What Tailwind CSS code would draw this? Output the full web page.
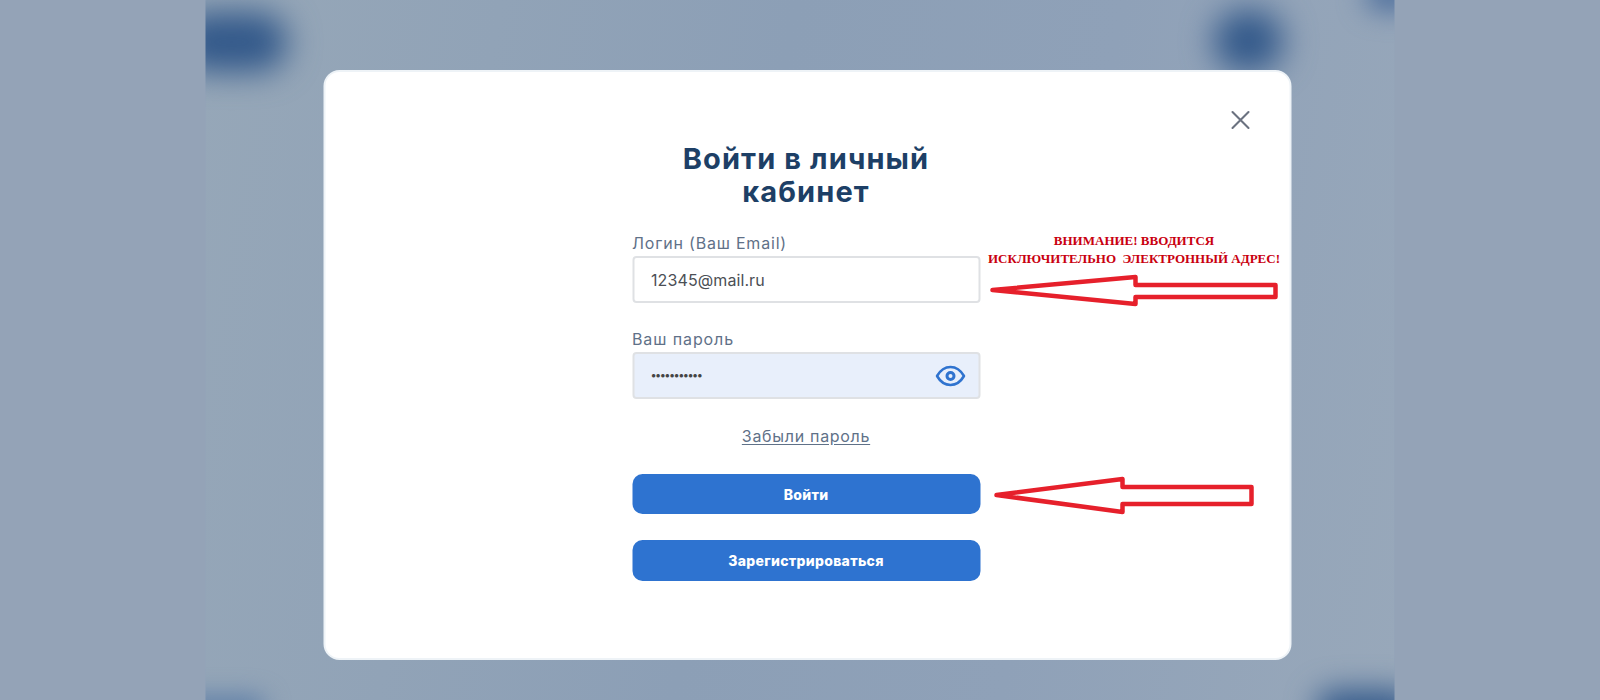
<!DOCTYPE html>
<html lang="ru">
<head>
<meta charset="utf-8">
<script src="https://cdn.jsdelivr.net/npm/@tailwindcss/browser@4"></script>
<title>Войти в личный кабинет</title>
</head>
<body class="m-0 h-[700px] w-[1600px] overflow-hidden bg-[#94a3b7] font-['Inter',sans-serif]">
<div class="relative mx-auto h-[700px] w-[1189px] -translate-x-[0.5px] overflow-hidden bg-[#91a3b9]">
  <div class="absolute inset-0 bg-[linear-gradient(100deg,#96a7b8_0%,#8c9fb6_45%,#8fa1b8_70%,#98a8ba_100%)]"></div>
  <div class="absolute left-[-30px] top-[12px] h-[60px] w-[112px] rounded-full bg-[#33598a] blur-[16px]"></div>
  <div class="absolute left-[1008px] top-[10px] h-[62px] w-[70px] rounded-full bg-[#33598a] blur-[16px]"></div>
  <div class="absolute left-[1160px] top-[-20px] h-[30px] w-[50px] rounded-full bg-[#46699a] blur-[14px]"></div>
  <div class="absolute left-[1110px] top-[690px] h-[40px] w-[100px] rounded-full bg-[#33598a] blur-[15px]"></div>
  <div class="absolute left-[-30px] top-[696px] h-[24px] w-[90px] rounded-full bg-[#5c7da6] blur-[12px]"></div>

  <div class="absolute left-[118px] top-[70px] flex h-[590px] w-[968px] justify-center rounded-[16px] border-[2px] border-[#eef3f7] bg-white pt-[70px]">
    <button class="absolute right-[39px] top-[38px] text-[#6b7280]" aria-label="Закрыть">
      <svg class="h-[20px] w-[20px]" viewBox="0 0 20 20" fill="none" stroke="currentColor" stroke-width="2.1" stroke-linecap="round"><path d="M2 2 18 18M18 2 2 18"/></svg>
    </button>
    <form class="ml-[-2px] flex w-[348px] flex-col text-[#5f7188]">
      <h1 class="text-center text-[29px] font-bold leading-[33px] tracking-[1.1px] text-[#1d3f66]">Войти в личный<br>кабинет</h1>
      <label class="mt-[24px] text-[16px] leading-[22px] tracking-[0.8px]">Логин (Ваш Email)</label>
      <div class="mt-[2px] flex h-[47px] items-center rounded-[4px] border-[2px] border-[#dfe1e4] bg-white pl-[17px] text-[16px] tracking-[0.1px] text-[#4b4f55]">12345@mail.ru</div>
      <label class="mt-[25px] text-[16px] leading-[22px] tracking-[0.9px]">Ваш пароль</label>
      <div class="mt-[2px] flex h-[47px] items-center justify-between rounded-[4px] border-[2px] border-[#dfe1e4] bg-[#e8effb] pl-[17px] pr-[13px] text-[#444]">
        <span class="text-[11px] font-bold leading-none tracking-[-0.6px]">•••••••••••</span>
        <svg class="h-[24px] w-[30px]" viewBox="0 0 30 24" fill="none" stroke="#2f73cf" stroke-width="2.6"><path d="M1.5 12C5 6 9.5 3 15 3s10 3 13.5 9C25 18 20.500 21 15 21S5 18 1.500 12Z"/><circle cx="15" cy="12" r="3.500" stroke-width="3"/></svg>
      </div>
      <a class="mt-[26px] text-center text-[16px] leading-[22px] tracking-[0.7px] underline underline-offset-2">Забыли пароль</a>
      <button class="mt-[27px] h-[40px] rounded-[10px] bg-[#2e73d0] text-[14px] font-extrabold tracking-[0.3px] text-white">Войти</button>
      <button class="mt-[26px] h-[41px] rounded-[10px] bg-[#2e73d0] text-[14px] font-extrabold tracking-[0.3px] text-white">Зарегистрироваться</button>
    </form>
  </div>

  <div class="absolute left-[749px] top-[232px] w-[360px] whitespace-pre text-center font-['Liberation_Serif',serif] text-[13px] font-bold leading-[18px] text-[#c9000f]">ВНИМАНИЕ! ВВОДИТСЯ
ИСКЛЮЧИТЕЛЬНО  ЭЛЕКТРОННЫЙ АДРЕС!</div>

  <svg class="absolute left-0 top-0 h-[700px] w-[1189px]" viewBox="205 0 1189 700" fill="none" stroke="#e6202b" stroke-width="4.5" stroke-linejoin="round">
    <path d="M992 290 1135 277V285H1275V297H1135V304Z"/>
    <path d="M996 495 1122 479V487H1251V504H1122V512Z"/>
  </svg>
</div>
</body>
</html>
